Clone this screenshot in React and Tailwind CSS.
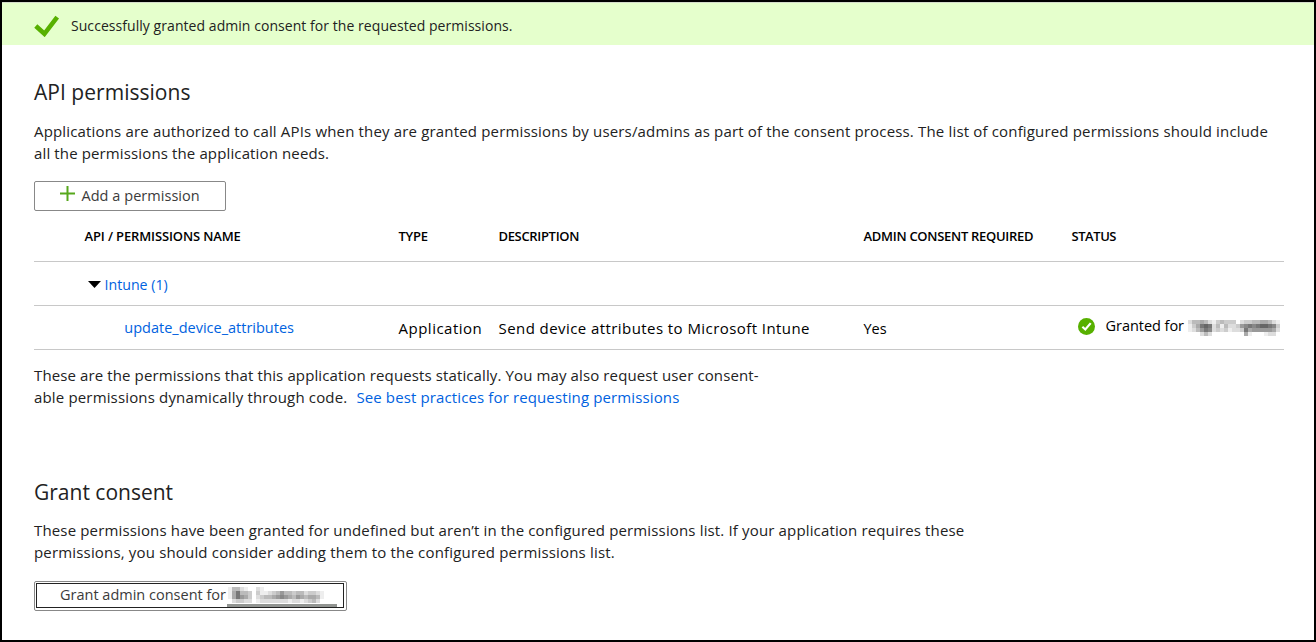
import React from "react";

const blurA = [
  "ddd bbb bbb aaa bbb ddd eee ccc bbb ccc ccc ccc fff ddd ccc ccc bbb bbb aaa aaa bbb ddd eee",
  "eee ccc aaa 777 666 777 ddd bbb eee bbb ddd ddd ccc 999 888 777 888 777 666 666 777 888 ccc",
  "eee ddd bbb 999 777 888 ddd ccc ddd ccc eee ddd ddd ccc 777 aaa 999 999 999 999 999 aaa ddd",
  "fff fff fff ddd bbb ddd fff fff fff fff fff fff fff fff aaa eee fff fff fff eee ddd ddd fff",
].map((r) => r.split(" "));

const blurB = [
  "eee bbb bbb ddd eee fff fff ddd eee fff fff fff fff fff fff fff fff fff fff fff fff fff fff fff",
  "eee aaa 777 bbb bbb ccc fff ccc eee eee ddd ccc bbb 999 bbb bbb ccc bbb bbb ddd ccc ccc ddd eee",
  "eee aaa 777 999 aaa ccc fff ddd ccc bbb bbb aaa 999 888 999 aaa bbb 999 aaa bbb aaa aaa bbb eee",
  "fff ddd ccc ccc ddd ddd fff eee ddd ddd ddd ddd ddd ddd ddd eee ddd ddd eee ddd ccc bbb ddd fff",
].map((r) => r.split(" "));

function Mosaic({ rows, className }) {
  const width = rows[0].length * 4;
  return (
    <svg width={width} height="16" viewBox={`0 0 ${width} 16`} shapeRendering="crispEdges" className={className} aria-hidden="true">
      {rows.map((r, y) =>
        r.map((c, x) => <rect key={`${x}-${y}`} x={x * 4} y={y * 4} width="4" height="4" fill={`#${c}`} />)
      )}
    </svg>
  );
}

const row = "grid grid-cols-[50px_314px_100px_365px_208px_213px] items-center border-b border-[#c8c8c8]";

export default function App() {
  return (
    <div className="h-[642px] w-[1316px] overflow-hidden whitespace-nowrap border-2 border-black bg-white font-['Open_Sans',sans-serif] text-[15px] leading-[22px] text-[#222]">
      <div className="flex h-[43px] items-center border-t border-[#d5dccb] bg-[#e5ffcc] pl-8">
        <svg width="26" height="22" viewBox="0 0 26 22" className="mt-[3px]" aria-hidden="true">
          <path d="M1.8 11 10.4 18.8 23.2 2.2" fill="none" stroke="#57b000" strokeWidth="4.6" />
        </svg>
        <span className="ml-[11px] pt-[4px] text-[14px] tracking-[0.055px]">
          Successfully granted admin consent for the requested permissions.
        </span>
      </div>

      <main className="pl-8 pt-[33px]">
        <h1 className="text-[21px] leading-7 tracking-[0.03px]">API permissions</h1>
        <p className="mt-[14px]">
          <span className="block tracking-[0.165px]">
            Applications are authorized to call APIs when they are granted permissions by users/admins as part of the consent process. The list of configured permissions should include
          </span>
          <span className="block tracking-[0.13px]">all the permissions the application needs.</span>
        </p>
        <button className="mt-[17px] flex h-[30px] w-[192px] items-center rounded-[2px] border border-[#888] pl-[25px] text-[14.5px] font-medium text-[#3b3b3b]">
          <svg width="15" height="15" viewBox="0 0 15 15" className="-mt-[5px]" aria-hidden="true">
            <path d="M7.5 0v15M0 7.5h15" stroke="#57a81c" strokeWidth="2" />
          </svg>
          <span className="ml-[6.5px] tracking-[0.04px]">Add a permission</span>
        </button>

        <div className="w-[1250px] text-[14.5px] font-medium text-black">
          <div className={`${row} h-[51px] text-[13px] font-semibold`}>
            <span />
            <span className="pl-[0.5px] tracking-[-0.13px]">API / PERMISSIONS NAME</span>
            <span className="pl-[0.5px] tracking-[-0.3px]">TYPE</span>
            <span className="pl-[0.5px] tracking-[-0.33px]">DESCRIPTION</span>
            <span className="pl-[0.5px] tracking-[-0.29px]">ADMIN CONSENT REQUIRED</span>
            <span className="pl-[0.5px] tracking-[-0.45px]">STATUS</span>
          </div>
          <div className={`${row} h-[44px]`}>
            <span />
            <span className="flex items-center pl-[4px] pt-[2px] text-[14.2px] text-[#0062e0]">
              <svg width="13" height="7" viewBox="0 0 13 7" className="mr-[3.5px] -mt-px" aria-hidden="true">
                <path d="M0 0h13L6.5 7z" fill="#000" />
              </svg>
              Intune (1)
            </span>
          </div>
          <div className={`${row} h-[44px]`}>
            <span />
            <span className="pl-[40.3px] text-[#0062e0]">update_device_attributes</span>
            <span className="pl-[0.5px] text-[15px] tracking-[0.5px]">Application</span>
            <span className="pl-[0.5px] text-[15px] tracking-[0.43px]">Send device attributes to Microsoft Intune</span>
            <span className="pl-[0.5px] pt-[2px]">Yes</span>
            <span className="flex items-center pb-[3px] pl-[7px]">
              <svg width="17" height="17" viewBox="0 0 17 17" className="mt-[1px]" aria-hidden="true">
                <circle cx="8.5" cy="8.5" r="8.5" fill="#57b000" />
                <path d="M4.4 8.8 7.3 11.5 12.7 5.1" fill="none" stroke="#fff" strokeWidth="2.2" />
              </svg>
              <span className="ml-[10.5px] w-[82.5px] tracking-[-0.04px]">Granted for</span>
              <Mosaic rows={blurA} className="mt-[3px]" />
            </span>
          </div>
        </div>

        <p className="mt-[14px]">
          <span className="block tracking-[0.115px]">
            These are the permissions that this application requests statically. You may also request user consent-
          </span>
          <span className="flex">
            <span className="tracking-[0.16px]">able permissions dynamically through code.</span>
            <a className="ml-[9px] tracking-[0.125px] text-[#0062e0]">See best practices for requesting permissions</a>
          </span>
        </p>

        <h2 className="mt-[70px] text-[21px] leading-7">Grant consent</h2>
        <p className="mt-[13px]">
          <span className="block tracking-[0.15px]">
            These permissions have been granted for undefined but aren’t in the configured permissions list. If your application requires these
          </span>
          <span className="block tracking-[0.17px]">
            permissions, you should consider adding them to the configured permissions list.
          </span>
        </p>
        <button className="mt-[18px] flex h-[30px] w-[313px] rounded-[2px] border border-[#888] pb-[2px] pl-px pr-[2px] pt-px text-[14.5px] font-medium text-[#3b3b3b]">
          <span className="flex h-[25px] w-full border border-[#222] pl-[23px]">
            <span className="w-[167px] text-left leading-[22px]">Grant admin consent for</span>
            <span className="flex h-[23px] w-[110px] flex-col border-b-[3px] border-[#919491] pl-px pt-[3px]">
              <Mosaic rows={blurB} />
            </span>
          </span>
        </button>
      </main>
    </div>
  );
}
